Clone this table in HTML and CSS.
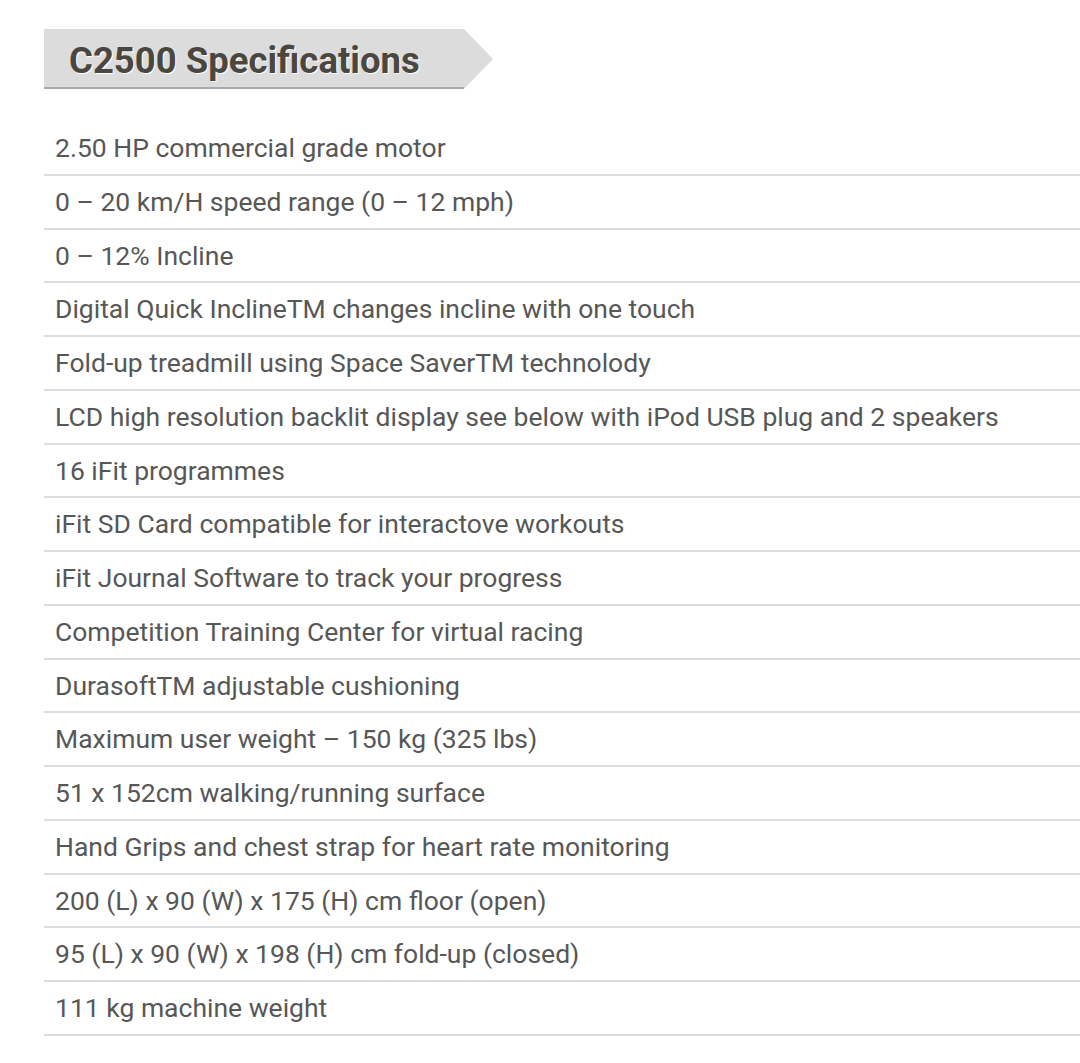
FILE: index.html
```html
<!DOCTYPE html>
<html>
<head>
<meta charset="utf-8">
<link rel="stylesheet" href="styles.css">
</head>
<body>
<div class="page">
  <div class="heading">
    <h2 class="heading-box">C2500 Specifications</h2>
    <div class="heading-arrow"></div>
  </div>
  <ul class="specs">
    <li>2.50 HP commercial grade motor</li>
    <li>0 – 20 km/H speed range (0 – 12 mph)</li>
    <li>0 – 12% Incline</li>
    <li>Digital Quick InclineTM changes incline with one touch</li>
    <li>Fold-up treadmill using Space SaverTM technolody</li>
    <li>LCD high resolution backlit display see below with iPod USB plug and 2 speakers</li>
    <li>16 iFit programmes</li>
    <li>iFit SD Card compatible for interactove workouts</li>
    <li>iFit Journal Software to track your progress</li>
    <li>Competition Training Center for virtual racing</li>
    <li>DurasoftTM adjustable cushioning</li>
    <li>Maximum user weight – 150 kg (325 lbs)</li>
    <li>51 x 152cm walking/running surface</li>
    <li>Hand Grips and chest strap for heart rate monitoring</li>
    <li>200 (L) x 90 (W) x 175 (H) cm floor (open)</li>
    <li>95 (L) x 90 (W) x 198 (H) cm fold-up (closed)</li>
    <li>111 kg machine weight</li>
  </ul>
</div>
</body>
</html>
```
FILE: styles.css
```css
html, body {
  margin: 0;
  padding: 0;
  background: #ffffff;
  overflow: hidden;
}
.page {
  padding: 29px 0 0 44px;
  font-family: Roboto, "Liberation Sans", sans-serif;
}
.heading {
  display: flex;
  align-items: flex-start;
  height: 60px;
}
.heading-box {
  margin: 0;
  width: 420px;
  height: 60px;
  box-sizing: border-box;
  background: #dcdcdc;
  border-bottom: 2px solid #a9a9a9;
  padding: 3px 0 0 25px;
  font-size: 36.5px;
  font-weight: 700;
  line-height: 57px;
  color: #4a4741;
  text-shadow: 1px 1px 0 #ffffff;
}
.heading-arrow {
  width: 0;
  height: 0;
  border-top: 30px solid transparent;
  border-bottom: 30px solid transparent;
  border-left: 29px solid #dcdcdc;
}
.specs {
  list-style: none;
  margin: 33px 0 0 0;
  padding: 0;
}
.specs li {
  box-sizing: border-box;
  height: 53.75px;
  border-bottom: 2px solid #dddddd;
  padding: 0 0 0 11px;
  font-size: 26.5px;
  line-height: 52px;
  color: #575757;
}
```
